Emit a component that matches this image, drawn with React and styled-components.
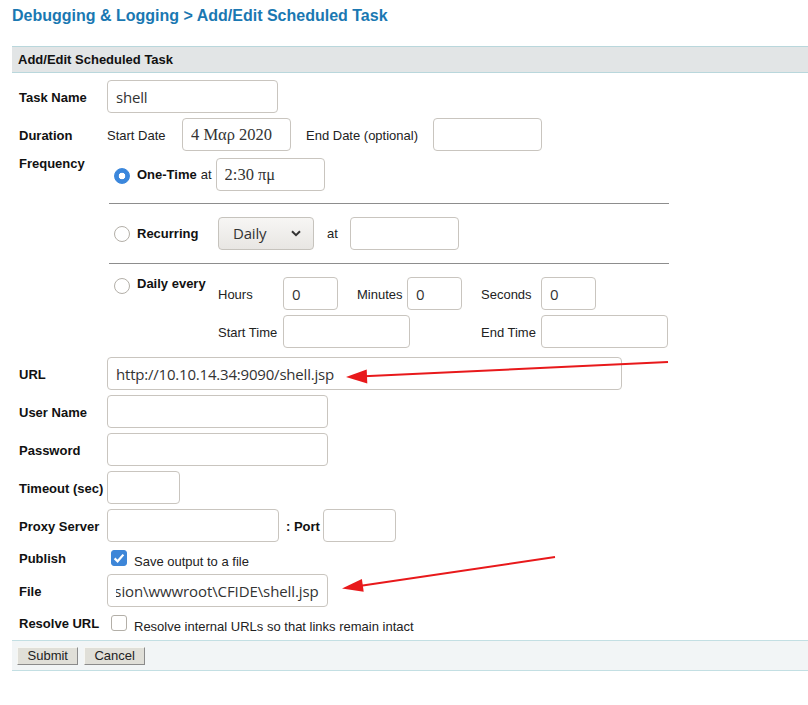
import React, { useEffect, useRef } from "react";
import styled, { createGlobalStyle } from "styled-components";

const GlobalStyle = createGlobalStyle`
  html, body {
    margin: 0;
    padding: 0;
    background: #fff;
  }
  body {
    font-family: "Liberation Sans", Arial, sans-serif;
    font-size: 13px;
    color: #111;
  }
  * {
    box-sizing: border-box;
  }
`;

const Page = styled.div`
  position: relative;
  width: 808px;
  height: 705px;
  overflow: hidden;
  padding-top: 7px;
`;

const Title = styled.h1`
  margin: 0 0 0 12px;
  font-size: 16px;
  line-height: 18px;
  font-weight: bold;
  color: #1a78b2;
`;

const Panel = styled.section`
  margin: 21px 0 0 12px;
`;

const PanelHead = styled.div`
  height: 27px;
  line-height: 25px;
  padding-left: 6px;
  background: #e2e5e6;
  border-top: 1px solid #b9d7dc;
  border-bottom: 1px solid #b9d7dc;
  font-weight: bold;
  font-size: 13px;
  color: #111;
`;

const Form = styled.div`
  display: grid;
  grid-template-columns: 88px 1fr;
  row-gap: 5px;
  padding: 7px 0 6px 7px;
`;

const Label = styled.div`
  font-weight: bold;
  font-size: 13px;
  line-height: 15px;
  color: #111;
  white-space: nowrap;
  align-self: ${(p) => (p.$top ? "start" : "center")};
  margin-top: ${(p) => p.$mt || 0}px;
`;

const Cell = styled.div`
  display: flex;
  align-items: center;
  min-height: ${(p) => p.$h || 33}px;
`;

const Caption = styled.span`
  flex: none;
  font-size: 13px;
  line-height: 15px;
  color: #222;
  white-space: nowrap;
  width: ${(p) => (p.$w ? `${p.$w}px` : "auto")};
  margin-left: ${(p) => p.$ml || 0}px;
  margin-top: ${(p) => p.$mt || 0}px;
`;

const Field = styled.input`
  flex: none;
  width: ${(p) => p.$w}px;
  height: 33px;
  margin-left: ${(p) => p.$ml || 0}px;
  padding: 0 8px;
  border: 1px solid #c9c5bf;
  border-radius: 4px;
  background: #fff;
  color: #333;
  font-family: ${(p) =>
    p.$serif ? '"Liberation Serif", "DejaVu Serif", serif' : '"Open Sans", "Noto Sans", sans-serif'};
  font-size: ${(p) => (p.$serif ? "16.5px" : "15px")};
  letter-spacing: ${(p) => (p.$serif ? "0" : p.$ls || "-0.2px")};
  outline: none;
  grid-column: ${(p) => p.$col || "auto"};
  justify-self: start;
`;

const FreqBlock = styled.div`
  padding: 2px 0 4px;
`;

const Option = styled.div`
  display: flex;
  align-items: ${(p) => (p.$top ? "flex-start" : "center")};
  height: ${(p) => (p.$h ? `${p.$h}px` : "auto")};
`;

const OptionHead = styled.div`
  flex: none;
  display: flex;
  align-items: ${(p) => (p.$top ? "flex-start" : "center")};
  width: ${(p) => (p.$w ? `${p.$w}px` : "auto")};
  padding-left: 7px;
`;

const OptionName = styled.span`
  margin-left: 7px;
  margin-top: ${(p) => p.$mt || 0}px;
  font-weight: bold;
  font-size: 13px;
  line-height: 15px;
  color: #111;
  white-space: nowrap;
`;

const Radio = styled.span`
  flex: none;
  width: 16px;
  height: 16px;
  margin-top: ${(p) => p.$mt || 0}px;
  border-radius: 50%;
  border: 1px solid ${(p) => (p.$on ? "#3b87dc" : "#b3afa8")};
  background: ${(p) =>
    p.$on ? "radial-gradient(circle, #fff 0 3px, #3b87dc 3.6px)" : "#fff"};
`;

const Divider = styled.div`
  width: 560px;
  height: 1px;
  margin: ${(p) => p.$m}px 0 ${(p) => p.$m}px 2px;
  background: #8d8d8d;
`;

const SelectBox = styled.div`
  flex: none;
  display: flex;
  align-items: center;
  justify-content: space-between;
  width: 96px;
  height: 33px;
  padding: 0 12px 0 14px;
  border: 1px solid #c6c3bd;
  border-radius: 4px;
  background: linear-gradient(#f7f6f4, #e8e6e3);
  color: #333;
  font-family: "Open Sans", "Noto Sans", sans-serif;
  font-size: 15px;
  letter-spacing: -0.2px;
`;

const TimeGrid = styled.div`
  display: grid;
  grid-template-columns: 65px 74px 50px 74px 60px auto;
  grid-template-rows: 33px 33px;
  row-gap: 5px;
  align-items: center;
`;

const Check = styled.span`
  flex: none;
  display: flex;
  align-items: center;
  justify-content: center;
  width: 16px;
  height: 16px;
  margin-left: 4px;
  border-radius: 3px;
  border: 1px solid ${(p) => (p.$on ? "#3d86d8" : "#b3afa8")};
  background: ${(p) => (p.$on ? "#3d86d8" : "#fff")};
`;

const Footer = styled.div`
  display: flex;
  gap: 6px;
  align-items: flex-start;
  height: 31px;
  padding: 6px 0 0 5px;
  background: #f2f5f6;
  border-top: 1px solid #c3dfe3;
  border-bottom: 1px solid #c3dfe3;
`;

const Button = styled.button`
  height: 18px;
  padding: 0 ${(p) => p.$pad || 9}px;
  margin: 0;
  font-family: "Liberation Sans", Arial, sans-serif;
  font-size: 13px;
  line-height: 16px;
  color: #222;
  background: #e0dfd8;
  border: 1px solid;
  border-color: #f6f6f2 #8b8b8b #8b8b8b #f6f6f2;
  border-radius: 0;
`;

const Arrows = styled.svg`
  position: absolute;
  left: 0;
  top: 0;
  width: 808px;
  height: 705px;
  pointer-events: none;
`;

const Chevron = () => (
  <svg width="10" height="7" viewBox="0 0 10 7">
    <polyline points="1,1.2 5,5.2 9,1.2" fill="none" stroke="#333" strokeWidth="2" />
  </svg>
);

const Tick = () => (
  <svg width="14" height="14" viewBox="0 0 14 14">
    <path d="M2.6 7.4 L5.6 10.3 L11.4 3.6" fill="none" stroke="#fff" strokeWidth="2.2" />
  </svg>
);

const App = () => {
  const fileRef = useRef(null);

  useEffect(() => {
    if (fileRef.current) fileRef.current.scrollLeft = fileRef.current.scrollWidth;
  }, []);

  return (
    <Page>
      <GlobalStyle />
      <Title>Debugging &amp; Logging &gt; Add/Edit Scheduled Task</Title>
      <Panel>
        <PanelHead>Add/Edit Scheduled Task</PanelHead>
        <Form>
          <Label $mt={1}>Task Name</Label>
          <Cell>
            <Field $w={171} defaultValue="shell" />
          </Cell>

          <Label $mt={1}>Duration</Label>
          <Cell>
            <Caption $w={75} $mt={1}>Start Date</Caption>
            <Field $w={109} $serif defaultValue="4 Μαρ 2020" />
            <Caption $w={127} $ml={15} $mt={1}>End Date (optional)</Caption>
            <Field $w={109} />
          </Cell>

          <Label $top>Frequency</Label>
          <FreqBlock>
            <Option $h={33}>
              <OptionHead>
                <Radio $on $mt={3} />
                <OptionName>One-Time</OptionName>
              </OptionHead>
              <Caption $ml={4}>at</Caption>
              <Field $w={109} $ml={4} $serif defaultValue="2:30 πμ" />
            </Option>
            <Divider $m={12} />
            <Option $h={34}>
              <OptionHead $w={111}>
                <Radio $mt={2} />
                <OptionName>Recurring</OptionName>
              </OptionHead>
              <SelectBox>
                <span>Daily</span>
                <Chevron />
              </SelectBox>
              <Caption $ml={13}>at</Caption>
              <Field $w={109} $ml={12} />
            </Option>
            <Divider $m={13} />
            <Option $top>
              <OptionHead $w={111} $top>
                <Radio $mt={1} />
                <OptionName $mt={-1}>Daily every</OptionName>
              </OptionHead>
              <TimeGrid>
                <Caption $mt={1}>Hours</Caption>
                <Field $w={55} defaultValue="0" />
                <Caption $mt={1}>Minutes</Caption>
                <Field $w={55} defaultValue="0" />
                <Caption $mt={1}>Seconds</Caption>
                <Field $w={55} defaultValue="0" />
                <Caption $mt={1}>Start Time</Caption>
                <Field $w={127} $col="2 / span 3" />
                <Caption $mt={1}>End Time</Caption>
                <Field $w={127} />
              </TimeGrid>
            </Option>
          </FreqBlock>

          <Label $mt={1}>URL</Label>
          <Cell>
            <Field $w={515} defaultValue="http://10.10.14.34:9090/shell.jsp" />
          </Cell>

          <Label $mt={1}>User Name</Label>
          <Cell>
            <Field $w={221} />
          </Cell>

          <Label $mt={1}>Password</Label>
          <Cell>
            <Field $w={221} type="password" />
          </Cell>

          <Label $mt={1}>Timeout (sec)</Label>
          <Cell>
            <Field $w={73} />
          </Cell>

          <Label $mt={1}>Proxy Server</Label>
          <Cell>
            <Field $w={172} />
            <OptionName $mt={1}>: Port</OptionName>
            <Field $w={73} $ml={3} />
          </Cell>

          <Label>Publish</Label>
          <Cell $h={21}>
            <Check $on>
              <Tick />
            </Check>
            <Caption $ml={7} $mt={7}>Save output to a file</Caption>
          </Cell>

          <Label $mt={1}>File</Label>
          <Cell>
            <Field
              $w={221}
              $ls="-0.1px"
              ref={fileRef}
              defaultValue="C:\ColdFusion\wwwroot\CFIDE\shell.jsp"
            />
          </Cell>

          <Label>Resolve URL</Label>
          <Cell $h={21}>
            <Check />
            <Caption $ml={7} $mt={7}>Resolve internal URLs so that links remain intact</Caption>
          </Cell>
        </Form>
        <Footer>
          <Button $pad={9.5}>Submit</Button>
          <Button>Cancel</Button>
        </Footer>
      </Panel>

      <Arrows viewBox="0 0 808 705">
        <line x1="668" y1="362" x2="364" y2="376.2" stroke="#e8191b" strokeWidth="2" />
        <polygon points="346,377 367.3,383.5 366.7,369.5" fill="#e8191b" />
        <line x1="555" y1="557" x2="361" y2="585.7" stroke="#e8191b" strokeWidth="2" />
        <polygon points="342,588.5 363.7,591.8 361.9,579" fill="#e8191b" />
      </Arrows>
    </Page>
  );
};

export default App;
